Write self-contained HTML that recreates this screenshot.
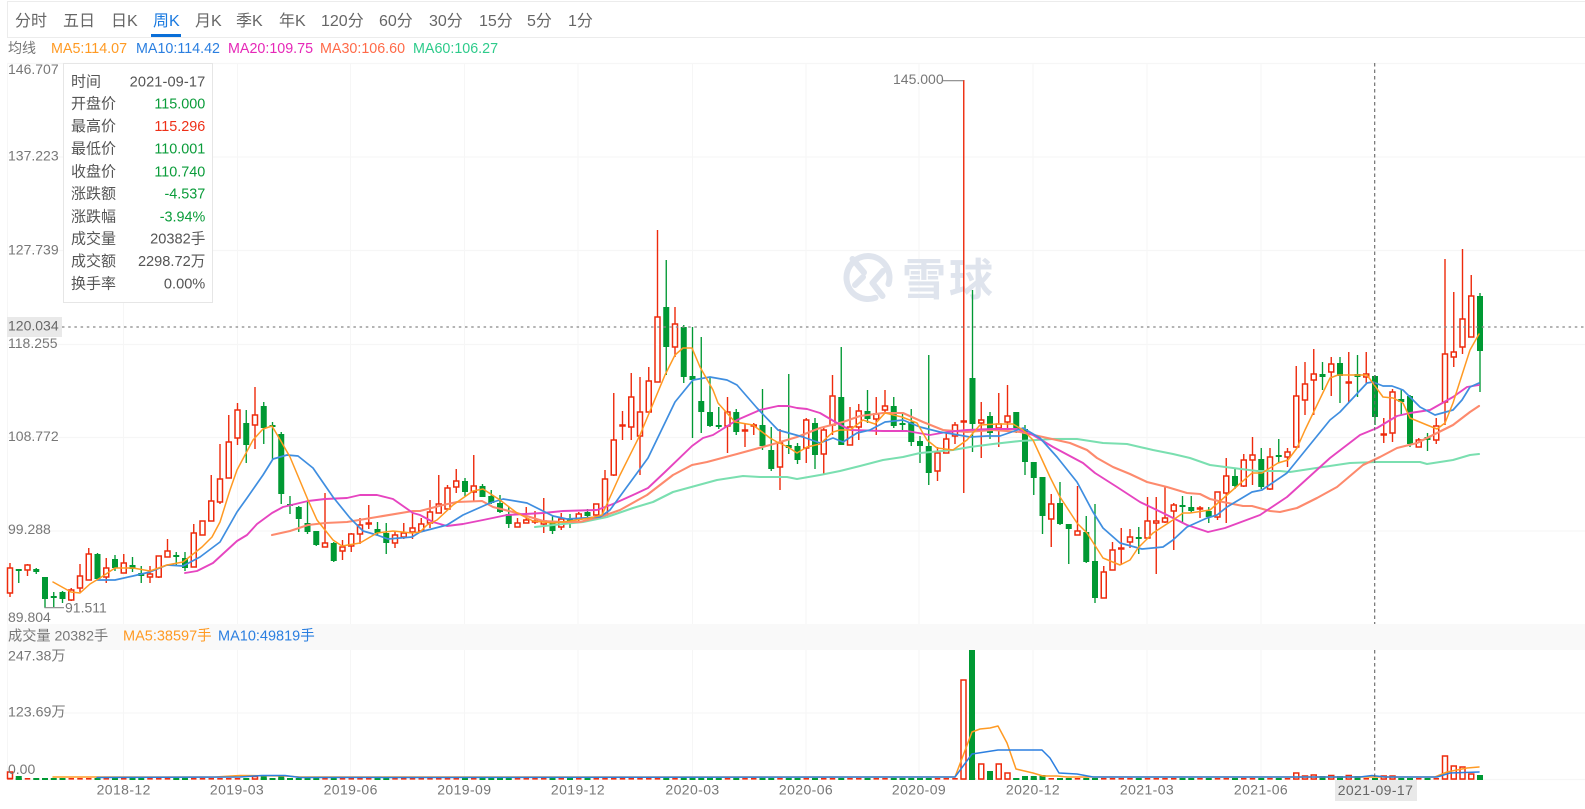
<!DOCTYPE html>
<html lang="zh">
<head>
<meta charset="utf-8">
<title>周K</title>
<style>
html,body{margin:0;padding:0;background:#fff;width:1585px;height:809px;overflow:hidden}
svg{display:block;position:absolute;left:0;top:0;filter:blur(.3px)}
text{font-family:"Liberation Sans","Noto Sans CJK SC",sans-serif;font-size:14px;fill:#777}
.tab{font-size:16px;fill:#666}
.tt{fill:#555;font-size:15px}
.n{text-anchor:end;fill:#555;font-size:14.6px}
.g{text-anchor:end;fill:#0a9c3a;font-size:14.4px}
.rd{text-anchor:end;fill:#ee3018;font-size:14.4px}
.ma{font-size:14.3px}
.d{text-anchor:middle;letter-spacing:.4px}
.wr{fill:none;stroke:#ee2a0c;stroke-width:1.4}
.br{fill:#fff;stroke:#ee2a0c;stroke-width:1.5}
.wg{fill:none;stroke:#009933;stroke-width:1.35}
.bg{fill:#009933}
.l{fill:none;stroke-linejoin:round;stroke-linecap:round}
</style>
</head>
<body>
<svg width="1585" height="809" viewBox="0 0 1585 809" xmlns="http://www.w3.org/2000/svg">
<rect width="1585" height="809" fill="#fff"/>

<!-- toolbar -->
<path d="M1585 1.5H7.5V37.5H1585" fill="none" stroke="#ececec"/>
<rect x="151" y="34" width="30" height="3" fill="#0a6fd8"/>
<text class="tab" x="15" y="26">分时</text>
<text class="tab" x="63" y="26">五日</text>
<text class="tab" x="111" y="26">日K</text>
<text class="tab" x="153" y="26" style="fill:#1a7ae0">周K</text>
<text class="tab" x="195" y="26">月K</text>
<text class="tab" x="236" y="26">季K</text>
<text class="tab" x="279" y="26">年K</text>
<text class="tab" x="321" y="26">120分</text>
<text class="tab" x="379" y="26">60分</text>
<text class="tab" x="429" y="26">30分</text>
<text class="tab" x="479" y="26">15分</text>
<text class="tab" x="527" y="26">5分</text>
<text class="tab" x="568" y="26">1分</text>

<!-- MA legend -->
<text x="8" y="53">均线</text>
<text class="ma" x="51" y="53" style="fill:#ff9a23">MA5:114.07</text>
<text class="ma" x="136" y="53" style="fill:#2b7fe0">MA10:114.42</text>
<text class="ma" x="228" y="53" style="fill:#e628b8">MA20:109.75</text>
<text class="ma" x="320" y="53" style="fill:#ff6a48">MA30:106.60</text>
<text class="ma" x="413" y="53" style="fill:#2ecb8b">MA60:106.27</text>

<!-- grid -->
<path d="M7 63.5H1585M7 157H1585M7 250.5H1585M7 344.5H1585M7 437.5H1585M7 531H1585M7 713H1585M7 779.5H1585" fill="none" stroke="#f6f6f6" stroke-width="1.3"/>
<path d="M7.5 63V780M123.5 63V780M237.5 63V780M350.5 63V780M464.5 63V780M578 63V780M692.5 63V780M806 63V780M919 63V780M1033 63V780M1147 63V780M1261 63V780" fill="none" stroke="#f6f6f6"/>

<!-- watermark -->
<g fill="none" stroke="#dfe4ed" stroke-width="6" stroke-linecap="round" stroke-linejoin="round">
<path d="M875.5 297.7A21.5 21.5 0 1 1 888.5 284M852.5 259L864 272.5M855 285L863 277M883 271L872.5 283L882.5 296"/>
</g>
<text x="902" y="295" style="font-size:44px;font-weight:700;fill:#dfe4ed;letter-spacing:3px">雪球</text>

<!-- volume header -->
<rect x="7" y="624" width="1578" height="26" fill="#f9f9f9"/>

<!-- candle wicks red -->
<path class="wr" d="M10 563V597M27.5 564V576M71.25 588V601M80 564V592M88.75 548V580M106.25 558V583M123.75 554V573M150 566V583M158.75 556V578M167.5 539V557M193.75 524V567M202.5 521V535M211.25 475V521M220 444V504M228.75 415V478M237.5 403V445M255 387V449M325 493V547M342.5 540V560M351.25 533V552M360 518V544M368.75 505V529M395 531V548M403.75 523V539M412.5 511V539M421.25 518V532M430 500V528M438.75 475V513M447.5 485V509M456.25 469V493M473.75 455V501M517.5 518V527M526.25 507V523M535 511V524M543.75 498V533M561.25 513V530M578.75 512V521M596.25 504V516M605 470V518M613.75 393V476M622.5 411V440M631.25 373V440M640 377V475M648.75 367V412M657.5 230V382M675 307V357M727.5 397V453M745 423V447M753.75 423V435M780 429V490M806.25 418V463M823.75 427V475M832.5 375V435M850 407V445M858.75 404V440M876.25 397V435M885 390V413M937.5 447V481M946.25 432V453M955 422V444M963.75 80V493M981.25 402V458M998.75 393V447M1007.5 385V428M1051.25 494V547M1077.5 486V535M1103.75 566V598M1112.5 542V570M1121.25 528V565M1130 529V548M1147.5 497V539M1156.25 497V574M1165 486V523M1173.75 503V550M1200 506V518M1217.5 492V520M1226.25 458V523M1243.75 454V487M1252.5 437V485M1270 448V490M1287.5 448V467M1296.25 366V448M1305 362V415M1313.75 349V415M1331.25 357V396M1348.75 352V402M1366.25 352V384M1383.75 418V443M1392.5 389V442M1418.75 438V447M1436.25 418V444M1445 259V425M1453.75 292V367M1462.5 249V354M1471.25 275V337"/>
<!-- candle wicks green -->
<path class="wg" d="M18.75 569V583M36.25 568V574M45 577V608M53.75 592V607M62.5 591V603M97.5 553V580M115 555V571M132.5 557V572M141.25 566V583M176.25 552V566M185 552V571M246.25 410V463M263.75 402V444M272.5 422V460M281.25 432V504M290 496V514M298.75 506V532M307.5 501V534M316.25 531V546M333.75 542V562M377.5 522V536M386.25 523V554M465 478V497M482.5 484V497M491.25 490V504M500 495V513M508.75 507V528M552.5 515V534M570 514V528M587.5 509V518M666.25 260V375M683.75 325V383M692.5 327V438M701.25 337V433M710 377V427M718.75 407V429M736.25 409V435M762.5 389V450M771.25 427V471M788.75 374V454M797.5 443V464M815 418V469M841.25 347V445M867.5 390V423M893.75 397V428M902.5 413V431M911.25 409V446M920 436V463M928.75 355V485M972.5 290V452M990 412V439M1016.25 412V433M1025 425V475M1033.75 462V495M1042.5 477V534M1060 482V525M1068.75 524V564M1086.25 516V563M1095 504V603M1138.75 527V554M1182.5 496V523M1191.25 496V513M1208.75 507V523M1235 468V489M1261.25 448V489M1278.75 439V463M1322.5 362V390M1340 357V403M1357.5 355V397M1375 375V425M1401.25 390V415M1410 395V447M1427.5 433V451M1480 293V392"/>
<!-- candle bodies red -->
<path class="br" d="M7.5 568h5V593h-5zM25 565h5V570h-5zM68.75 590h5V600h-5zM77.5 576h5V588h-5zM86.25 554h5V580h-5zM103.75 568h5V577h-5zM121.25 563h5V573h-5zM147.5 574h5V577h-5zM156.25 556h5V577h-5zM165 551h5V557h-5zM191.25 533h5V567h-5zM200 521h5V535h-5zM208.75 501h5V521h-5zM217.5 479h5V502h-5zM226.25 442h5V478h-5zM235 410h5V438h-5zM252.5 415h5V425h-5zM322.5 543h5V547h-5zM340 547h5V551h-5zM348.75 534h5V546h-5zM357.5 525h5V534h-5zM366.25 523h5v1h-5zM392.5 535h5V543h-5zM401.25 533h5V537h-5zM410 528h5V532h-5zM418.75 524h5V531h-5zM427.5 512h5V523h-5zM436.25 504h5V513h-5zM445 488h5V509h-5zM453.75 481h5V487h-5zM471.25 486h5V492h-5zM515 523h5V527h-5zM523.75 520h5V523h-5zM532.5 521h5v1h-5zM541.25 521h5V524h-5zM558.75 519h5V527h-5zM576.25 514h5V519h-5zM593.75 504h5V515h-5zM602.5 479h5V515h-5zM611.25 440h5V475h-5zM620 425h5v1h-5zM628.75 397h5V427h-5zM637.5 412h5V436h-5zM646.25 381h5V412h-5zM655 317h5V382h-5zM672.5 324h5V347h-5zM725 412h5V426h-5zM742.5 430h5v1h-5zM751.25 425h5v1h-5zM777.5 443h5V467h-5zM803.75 420h5V448h-5zM821.25 430h5V454h-5zM830 396h5V425h-5zM847.5 427h5V445h-5zM856.25 411h5V427h-5zM873.75 414h5V419h-5zM882.5 406h5V410h-5zM935 453h5V471h-5zM943.75 439h5V453h-5zM952.5 425h5V436h-5zM961.25 421h5v1h-5zM978.75 420h5V423h-5zM996.25 424h5V428h-5zM1005 416h5V422h-5zM1048.75 504h5V519h-5zM1075 531h5V535h-5zM1101.25 572h5V598h-5zM1110 550h5V570h-5zM1118.75 548h5v1h-5zM1127.5 537h5V542h-5zM1145 521h5V538h-5zM1153.75 521h5V523h-5zM1162.5 518h5V522h-5zM1171.25 505h5V511h-5zM1197.5 508h5v1h-5zM1215 492h5V517h-5zM1223.75 476h5V493h-5zM1241.25 460h5V486h-5zM1250 455h5V460h-5zM1267.5 457h5V489h-5zM1285 452h5V457h-5zM1293.75 396h5V447h-5zM1302.5 384h5V400h-5zM1311.25 374h5V380h-5zM1328.75 364h5V372h-5zM1346.25 382h5v1h-5zM1363.75 374h5V377h-5zM1381.25 434h5v1h-5zM1390 392h5V433h-5zM1416.25 440h5V447h-5zM1433.75 426h5V440h-5zM1442.5 354h5V402h-5zM1451.25 352h5V357h-5zM1460 319h5V347h-5zM1468.75 296h5V337h-5z"/>
<!-- candle bodies green -->
<path class="bg" d="M15.75 569h6V571h-6zM33.25 569h6V572h-6zM42 577h6V599h-6zM50.75 596h6V598h-6zM59.5 592h6V599h-6zM94.5 554h6V579h-6zM112 559h6V568h-6zM129.5 565h6V569h-6zM138.25 573h6V576h-6zM173.25 555h6V557h-6zM182 558h6V568h-6zM243.25 423h6V445h-6zM260.75 406h6V428h-6zM269.5 425h6V427h-6zM278.25 434h6V494h-6zM287 504h6V506h-6zM295.75 507h6V519h-6zM304.5 523h6V532h-6zM313.25 531h6V545h-6zM330.75 543h6V561h-6zM374.5 529h6V533h-6zM383.25 533h6V543h-6zM462 481h6V492h-6zM479.5 486h6V497h-6zM488.25 496h6V503h-6zM497 503h6V512h-6zM505.75 514h6V524h-6zM549.5 523h6V531h-6zM567 519h6V521h-6zM584.5 512h6V516h-6zM663.25 307h6V347h-6zM680.75 327h6V377h-6zM689.5 376h6V380h-6zM698.25 401h6V412h-6zM707 412h6V426h-6zM715.75 425h6V427h-6zM733.25 412h6V432h-6zM759.5 425h6V446h-6zM768.25 450h6V469h-6zM785.75 445h6V448h-6zM794.5 446h6V460h-6zM812 423h6V455h-6zM838.25 397h6V445h-6zM864.5 411h6V419h-6zM890.75 406h6V426h-6zM899.5 423h6V425h-6zM908.25 422h6V442h-6zM917 441h6V446h-6zM925.75 446h6V473h-6zM969.5 378h6V424h-6zM987 416h6V433h-6zM1013.25 412h6V430h-6zM1022 429h6V462h-6zM1030.75 462h6V478h-6zM1039.5 477h6V516h-6zM1057 503h6V524h-6zM1065.75 524h6V529h-6zM1083.25 532h6V562h-6zM1092 561h6V598h-6zM1135.75 537h6V539h-6zM1179.5 505h6V507h-6zM1188.25 507h6V511h-6zM1205.75 511h6V517h-6zM1232 476h6V486h-6zM1258.25 459h6V487h-6zM1275.75 455h6V457h-6zM1319.5 374h6V377h-6zM1337 363h6V376h-6zM1354.5 374h6V377h-6zM1372 376h6V417h-6zM1398.25 399h6V402h-6zM1407 396h6V444h-6zM1424.5 437h6V440h-6zM1477 296h6V351h-6z"/>

<!-- MA lines -->
<polyline class="l" stroke="#7adfb0" stroke-width="2.1" points="535,527 563,524 583,522 607,517 633,508 653,502 673,492 717,480 743,476 760,477 787,477 797,479 820,475 840,471 860,466 883,460 903,457 920,453 953,450 970,447 993,444 1020,441 1053,439 1077,439 1103,443 1127,444 1153,450 1173,454 1190,458 1210,465 1233,468 1257,471 1280,471 1290,472 1323,467 1350,463 1377,462 1420,462 1427,464 1453,460 1470,455 1479,454"/>
<polyline class="l" stroke="#fd8a6d" stroke-width="2.1" points="272,535 290,531 308,525 325,523 347,522 377,517 413,511 420,511 443,505 457,502 482,501 493,507 517,513 543,521 563,522 580,522 603,516 620,510 647,495 673,475 692,465 707,462 737,454 770,445 797,437 820,428 843,422 860,416 883,413 903,413 923,422 943,430 967,432 993,430 1020,432 1043,437 1070,443 1087,450 1097,458 1113,467 1130,474 1147,482 1167,487 1187,493 1200,494 1210,499 1223,502 1243,506 1252,506 1270,511 1280,512 1297,508 1317,498 1337,487 1363,465 1380,457 1397,448 1417,443 1437,433 1453,425 1470,412 1479,406"/>
<polyline class="l" stroke="#e645c0" stroke-width="1.9" points="185,573 197,571 213,563 237,541 247,535 257,524 272,513 283,507 308,501 325,499 347,498 360,495 377,495 393,499 413,513 420,515 433,522 447,526 463,524 483,520 507,515 543,513 563,511 597,510 613,504 633,495 648,488 665,472 692,446 703,438 713,435 737,420 760,410 778,406 788,406 797,408 807,409 820,413 837,423 850,430 883,431 907,431 930,435 947,432 967,430 993,429 1017,429 1033,435 1053,447 1083,463 1095,473 1117,487 1140,502 1163,513 1187,525 1208,532 1225,528 1260,515 1287,497 1330,458 1360,435 1377,428 1397,416 1410,413 1430,410 1453,397 1467,387 1479,385"/>
<polyline class="l" stroke="#3f8ee0" stroke-width="1.7" points="97,580 115,580 133,576 150,572 167,565 183,566 200,557 220,542 237,512 247,498 263,475 273,459 287,455 298,456 313,468 333,497 350,518 363,531 377,535 388,539 412,537 420,532 447,525 463,515 490,503 503,499 527,503 553,516 567,519 600,517 610,510 648,458 675,402 693,380 710,377 727,380 737,385 757,408 778,430 803,437 820,443 833,438 843,442 857,433 870,430 885,422 903,420 920,427 940,432 953,434 970,437 987,436 1000,436 1023,428 1040,438 1057,457 1077,482 1093,512 1103,528 1120,543 1142,549 1163,547 1173,540 1187,527 1207,518 1217,515 1227,507 1252,492 1262,490 1287,473 1330,420 1340,412 1367,383 1373,382 1383,386 1392,386 1403,390 1420,407 1435,415 1453,410 1462,400 1470,387 1479,383"/>
<polyline class="l" stroke="#ff9a23" stroke-width="1.5" points="53,582 71,592 80,593 90,584 100,578 115,568 133,568 150,571 167,565 183,562 202,547 212,537 220,522 230,490 237,470 253,440 263,429 272,426 282,443 290,457 308,500 317,520 333,540 342,546 360,543 377,533 393,531 412,533 420,532 427,525 437,520 453,505 473,491 483,489 500,500 517,513 533,521 553,523 570,521 590,518 602,515 620,475 640,435 665,375 675,355 683,348 692,348 700,367 713,390 718,403 735,422 753,425 770,438 777,442 788,447 797,453 807,447 820,444 833,432 840,430 850,430 863,420 875,424 885,413 902,417 917,423 927,440 937,448 953,450 967,440 980,425 997,424 1013,424 1023,430 1033,440 1050,477 1060,497 1077,523 1087,533 1103,558 1120,565 1130,560 1138,548 1153,533 1173,520 1183,513 1190,513 1210,510 1235,488 1252,473 1262,473 1278,463 1288,460 1297,448 1305,430 1330,378 1338,375 1367,375 1383,397 1393,398 1403,403 1410,418 1427,425 1437,429 1445,423 1453,403 1470,350 1479,334"/>

<!-- annotations -->
<path d="M943 80.7H963.5M44.5 607.7H64" fill="none" stroke="#888" stroke-width="1.2"/>
<text x="893" y="84">145.000</text>
<text x="65" y="612.7">91.511</text>

<!-- volume bars -->
<path d="M7.25 778.8H1483" fill="none" stroke="#ee2a0c" stroke-width="1.7" stroke-dasharray="5.5 3.25"/>
<path d="M15.75 779h6M33.25 779h6M42 779h6M50.75 779h6M59.5 779h6M94.5 779h6M112 779h6M129.5 779h6M138.25 779h6M173.25 779h6M182 779h6M243.25 779h6M260.75 779h6M269.5 779h6M278.25 779h6M287 779h6M295.75 779h6M304.5 779h6M313.25 779h6M330.75 779h6M374.5 779h6M383.25 779h6M462 779h6M479.5 779h6M488.25 779h6M497 779h6M505.75 779h6M549.5 779h6M567 779h6M584.5 779h6M663.25 779h6M680.75 779h6M689.5 779h6M698.25 779h6M707 779h6M715.75 779h6M733.25 779h6M759.5 779h6M768.25 779h6M785.75 779h6M794.5 779h6M812 779h6M838.25 779h6M864.5 779h6M890.75 779h6M899.5 779h6M908.25 779h6M917 779h6M925.75 779h6M987 779h6M1013.25 779h6M1022 779h6M1030.75 779h6M1039.5 779h6M1057 779h6M1065.75 779h6M1083.25 779h6M1092 779h6M1135.75 779h6M1179.5 779h6M1188.25 779h6M1205.75 779h6M1232 779h6M1258.25 779h6M1275.75 779h6M1319.5 779h6M1337 779h6M1354.5 779h6M1372 779h6M1398.25 779h6M1407 779h6M1424.5 779h6M1477 779h6" fill="none" stroke="#009933" stroke-width="1.9"/>
<path class="br" d="M7.5 772h5V778.5h-5zM252.5 776.5h5V779h-5zM961 680h5V779h-5zM978.75 764h5V779h-5zM996.25 764h5V779h-5zM1005 773h5V779h-5zM1293.75 773h5V779h-5zM1302.5 776h5V779h-5zM1311.25 775h5V779h-5zM1328.75 775.5h5V779h-5zM1346.25 775.5h5V779h-5zM1381.25 776h5V779h-5zM1390 776h5V779h-5zM1442.5 756h5V779h-5zM1451.25 766h5V779h-5zM1460 767h5V779h-5zM1468.75 774h5V779h-5z"/>
<path class="bg" d="M15.75 776h6V780h-6zM260.75 776h6V780h-6zM278.25 776h6V780h-6zM969 650h6V780h-6zM987 771h6V780h-6zM1013.25 778h6V780h-6zM1022 776h6V780h-6zM1030.75 776h6V780h-6zM1039.5 775h6V780h-6zM1319.5 776h6V780h-6zM1337 776h6V780h-6zM1354.5 776h6V780h-6zM1477 775h6V780h-6z"/>
<polyline class="l" stroke="#ff9a23" stroke-width="1.5" points="53,777 215,777 240,775.5 285,776 300,777 955,777 972,732 980,729 990,728 998,726 1007,743 1016,769 1033,773 1043,776 1057,776 1067,777 1435,777 1447,772 1467,768 1479,767"/>
<polyline class="l" stroke="#2b7fe0" stroke-width="1.5" points="97,777.5 240,777 262,775.5 285,775.5 300,777.5 955,777 972,754 998,750 1042,750 1050,758 1059,773 1077,774 1093,777 1360,777 1372,775.5 1385,777 1437,777 1450,773 1479,772"/>

<!-- crosshair -->
<path d="M62 327H1585" fill="none" stroke="#888" stroke-width="1.3" stroke-dasharray="2.5 3.7"/>
<path d="M1374.7 63V624M1374.7 650V801" fill="none" stroke="#666" stroke-width="1.1" stroke-dasharray="3.5 3"/>

<!-- y labels -->
<text x="8" y="74">146.707</text>
<text x="8" y="160.5">137.223</text>
<text x="8" y="254.5">127.739</text>
<text x="8" y="348">118.255</text>
<rect x="7" y="317" width="55" height="20" fill="#e9e9e9"/>
<text x="8" y="330.7" style="fill:#666">120.034</text>
<text x="8" y="441">108.772</text>
<text x="8" y="534">99.288</text>
<text x="8" y="622">89.804</text>

<!-- volume labels -->
<text x="8" y="640.7" style="font-size:14.2px">成交量 20382手</text>
<text x="123" y="640.7" style="fill:#ff9a23;font-size:14.5px">MA5:38597手</text>
<text x="218" y="640.7" style="fill:#2b7fe0;font-size:14.5px">MA10:49819手</text>
<text x="8" y="660.7" style="font-size:14.2px">247.38万</text>
<text x="8" y="716.7" style="font-size:14.2px">123.69万</text>
<text x="8" y="774">0.00</text>

<!-- time labels -->
<text class="d" x="123.7" y="794.3">2018-12</text>
<text class="d" x="237" y="794.3">2019-03</text>
<text class="d" x="350.7" y="794.3">2019-06</text>
<text class="d" x="464.3" y="794.3">2019-09</text>
<text class="d" x="578" y="794.3">2019-12</text>
<text class="d" x="692.5" y="794.3">2020-03</text>
<text class="d" x="806" y="794.3">2020-06</text>
<text class="d" x="919" y="794.3">2020-09</text>
<text class="d" x="1033" y="794.3">2020-12</text>
<text class="d" x="1147" y="794.3">2021-03</text>
<text class="d" x="1261" y="794.3">2021-06</text>
<rect x="1335" y="780" width="82" height="21" fill="#e9e9e9"/>
<text class="d" x="1375.5" y="795" style="fill:#666">2021-09-17</text>

<!-- tooltip -->
<rect x="63.5" y="63.5" width="149" height="239" fill="#fff" stroke="#e6e6e6"/>
<text class="tt" x="71" y="86.5">时间</text><text class="n" x="205.3" y="86.5" style="letter-spacing:.1px">2021-09-17</text>
<text class="tt" x="71" y="108.5">开盘价</text><text class="g" x="205.3" y="108.5">115.000</text>
<text class="tt" x="71" y="131">最高价</text><text class="rd" x="205.3" y="131">115.296</text>
<text class="tt" x="71" y="153.5">最低价</text><text class="g" x="205.3" y="153.5">110.001</text>
<text class="tt" x="71" y="176.3">收盘价</text><text class="g" x="205.3" y="176.3">110.740</text>
<text class="tt" x="71" y="198.5">涨跌额</text><text class="g" x="205.3" y="198.5">-4.537</text>
<text class="tt" x="71" y="221.3">涨跌幅</text><text class="g" x="205.3" y="221.3">-3.94%</text>
<text class="tt" x="71" y="243.5">成交量</text><text class="n" x="205.3" y="243.5">20382手</text>
<text class="tt" x="71" y="266">成交额</text><text class="n" x="205.3" y="266">2298.72万</text>
<text class="tt" x="71" y="288.5">换手率</text><text class="n" x="205.3" y="288.5">0.00%</text>
</svg>
</body>
</html>
